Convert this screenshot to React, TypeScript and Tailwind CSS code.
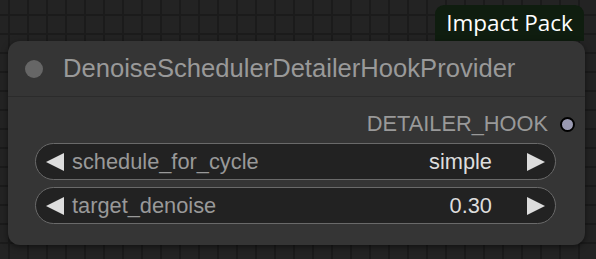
import React from "react";

const LeftArrow = () => (
  <svg width="18" height="18" viewBox="0 0 18 18" className="shrink-0">
    <polygon points="0,9 18,0 18,18" fill="#dddddd" />
  </svg>
);

const RightArrow = () => (
  <svg width="18" height="18" viewBox="0 0 18 18" className="shrink-0">
    <polygon points="18,9 0,0 0,18" fill="#dddddd" />
  </svg>
);

const Widget = ({ label, value }: { label: string; value: string }) => {
  return (
    <div className="flex items-center h-[37px] rounded-full border-[1.5px] border-[#6a6a6a] bg-[#222222] pl-[10px] pr-[10px]">
      <LeftArrow />
      <div className="ml-[8px] flex-1 text-[21.8px] text-[#999999] leading-none">{label}</div>
      <div className="text-[21.8px] text-[#dddddd] leading-none">{value}</div>
      <div className="ml-[35px]">
        <RightArrow />
      </div>
    </div>
  );
};

export default function App() {
  return (
    <div
      className="w-[596px] h-[259px] overflow-hidden bg-[#232323] bg-[linear-gradient(#1b1b1b_2px,transparent_2px),linear-gradient(90deg,#1b1b1b_2px,transparent_2px)] bg-[size:19px_19px] bg-[position:8px_14px] pl-[8px] pt-[5px]"
      style={{ fontFamily: '"Liberation Sans", Arial, sans-serif' }}
    >
      <div className="flex flex-col w-[577px]">
        <div className="self-end mr-[1px] h-[36px] w-[149px] rounded-t-[9px] bg-[#0f1d0f] flex items-center justify-center text-[22.5px] text-white" style={{ fontFamily: '"Open Sans", sans-serif' }}>
          Impact Pack
        </div>
        <div className="h-[204px] rounded-[12px] bg-[#353535] shadow-[0_2px_6px_rgba(0,0,0,0.5)] overflow-hidden">
          <div className="h-[56px] flex items-center border-b border-[#2b2b2b]">
            <div className="ml-[17px] w-[18px] h-[18px] rounded-full bg-[#666666]" />
            <div className="ml-[20px] text-[25.6px] text-[#999999] leading-none">DenoiseSchedulerDetailerHookProvider</div>
          </div>
          <div className="flex items-center justify-end h-[24px] mt-[15px] pr-[10px]">
            <div className="text-[21.8px] text-[#999999] leading-none">DETAILER_HOOK</div>
            <div className="ml-[12px] w-[15px] h-[15px] rounded-full bg-[#9a9ab2] border-2 border-black" />
          </div>
          <div className="flex flex-col gap-[7px] mt-[7px] pl-[27px] pr-[29px]">
            <Widget label="schedule_for_cycle" value="simple" />
            <Widget label="target_denoise" value="0.30" />
          </div>
        </div>
      </div>
    </div>
  );
}
